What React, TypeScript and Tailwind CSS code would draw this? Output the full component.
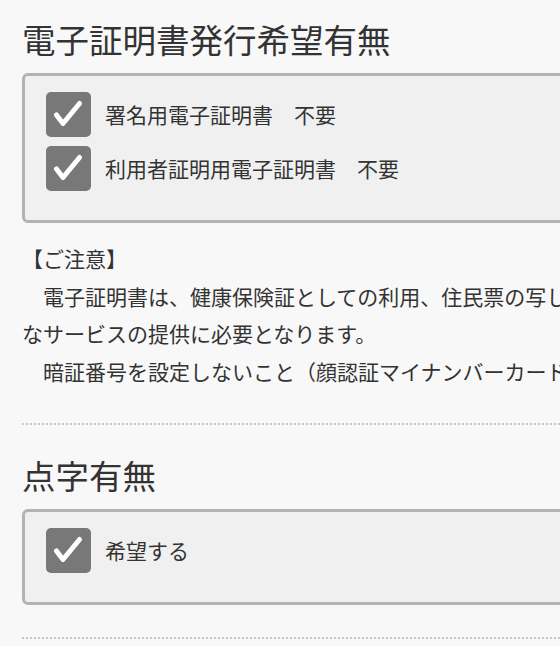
import React from 'react';

const font = { fontFamily: '"Noto Sans CJK JP", "Noto Sans", sans-serif' };
const SP = '\u3000';

// ---- check box ----
const CheckBox = () => (
  <span className="flex h-[45px] w-[45px] shrink-0 items-center justify-center rounded-[5px] bg-[#787878]">
    <svg width="45" height="45" viewBox="0 0 45 45" fill="none">
      <path
        d="M10.5 23 L17 31.5 L33.5 11.5"
        stroke="#ffffff"
        strokeWidth="5"
        strokeLinecap="round"
        strokeLinejoin="round"
      />
    </svg>
  </span>
);

type Item = { label: string };

const CheckGroup = ({ items }: { items: Item[] }) => (
  <div className="mt-[10px] rounded-md border-[3px] border-[#b3b3b3] bg-[#f0f0f0] pb-[29px] pl-[21px] pt-[16px]">
    <div className="flex flex-col gap-[9px]">
      {items.map((it) => (
        <label key={it.label} className="flex items-center gap-[14px]">
          <CheckBox />
          <span className="text-[21px] leading-none text-[#333333]">{it.label}</span>
        </label>
      ))}
    </div>
  </div>
);

const Divider = () => <hr className="mt-[32px] border-0 border-t-2 border-dotted border-[#c6c6c6]" />;

export default function App() {
  return (
    <div className="min-h-screen w-full overflow-hidden bg-[#f8f8f8]" style={font}>
      <div className="w-[960px] pl-[22px] pt-[16px]">
        {/* 電子証明書 */}
        <section>
          <h2 className="text-[33.5px] font-normal leading-[1.4] text-[#333333]">電子証明書発行希望有無</h2>
          <CheckGroup
            items={[
              { label: '署名用電子証明書　不要' },
              { label: '利用者証明用電子証明書　不要' },
            ]}
          />
          <div className="mt-[17px] text-[21px] leading-[1.8] text-[#333333]">
            <p>【ご注意】</p>
            <p>
              {SP}電子証明書は、健康保険証としての利用、住民票の写し等のコンビニ交付等、様々
              <br />
              なサービスの提供に必要となります。
            </p>
            <p>{SP}暗証番号を設定しないこと（顔認証マイナンバーカード）も選択できます。</p>
          </div>
          <Divider />
        </section>

        {/* 点字 */}
        <section className="mt-[27px]">
          <h2 className="text-[33.5px] font-normal leading-[1.4] text-[#333333]">点字有無</h2>
          <CheckGroup items={[{ label: '希望する' }]} />
          <Divider />
        </section>
      </div>
    </div>
  );
}
